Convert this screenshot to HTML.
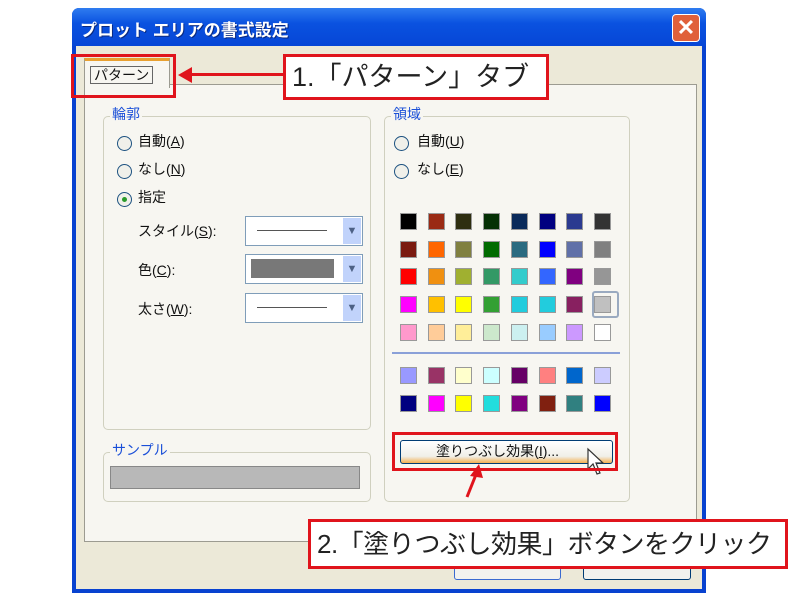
<!DOCTYPE html>
<html><head><meta charset="utf-8">
<style>
body{margin:0;width:800px;height:600px;background:#fff;position:relative;overflow:hidden;font-family:"Liberation Sans","Noto Sans CJK JP",sans-serif;}
.abs{position:absolute;}
.win{left:72px;top:8px;width:634px;height:585px;background:#0842d0;border-radius:7px 7px 0 0;}
.title{left:72px;top:8px;width:634px;height:38px;border-radius:7px 7px 0 0;background:linear-gradient(#2f7cf0,#0a52e0 40%,#0646d6);}
.ttext{left:80px;top:16px;color:#fff;font-weight:bold;font-size:17px;text-shadow:1px 1px #0a2a80;}
.close{left:672px;top:14px;width:26px;height:26px;border-radius:4px;background:#e0603a;border:1px solid #fff;color:#fff;font-weight:bold;font-size:22px;line-height:25px;text-align:center;}
.body{left:76px;top:46px;width:626px;height:543px;background:#ece9d8;}
.panel{left:84px;top:84px;width:611px;height:456px;background:#f7f6f1;border:1px solid #9c9b91;}
.grp{border:1px solid #d0d0bf;border-radius:5px;}
.lbl{color:#1a4fd8;font-size:14px;background:#f7f6f1;padding:0 2px;}
.t{font-size:14px;color:#111;white-space:nowrap;}
.radio{width:13px;height:13px;border:1px solid #1c5180;border-radius:50%;background:#f0f0ea;}
.combo{width:116px;height:28px;border:1px solid #7f9db9;background:#fff;}
.combo .dd{position:absolute;right:1px;top:1px;width:18px;height:26px;background:#c1d3fb;color:#4d6185;font-size:11px;text-align:center;line-height:26px;}
.sw{width:15px;height:15px;border:1px solid #999;}
.red{border:3px solid #e0141c;}
.callout{background:#fff;font-size:27px;color:#222;white-space:nowrap;overflow:hidden;}
.btn{border:1px solid #003c74;border-radius:3px;background:#f2f2ee;}
</style></head><body>
<div class="abs win"></div>
<div class="abs title"></div>
<div class="abs ttext">プロット エリアの書式設定</div>
<div class="abs close">✕</div>
<div class="abs body"></div>
<div class="abs panel"></div>
<div class="abs" style="left:84px;top:58px;width:84px;height:27px;background:#f7f6f1;border:1px solid #9c9b91;border-bottom:none;border-top:3px solid #e8a030;"></div>
<div class="abs t" style="left:90px;top:66px;border:1px solid #666;padding:0 3px;font-size:14px;line-height:16px;">パターン</div>
<div class="abs red" style="left:71px;top:54px;width:99px;height:38px;"></div>
<div class="abs" style="left:190px;top:73px;width:95px;height:3px;background:#e0141c;"></div>
<div class="abs" style="left:178px;top:67px;width:0;height:0;border-top:8px solid transparent;border-bottom:8px solid transparent;border-right:14px solid #e0141c;"></div>
<div class="abs red callout" style="left:283px;top:54px;width:254px;height:40px;line-height:40px;padding-left:6px;">1.「パターン」タブ</div>

<div class="abs grp" style="left:103px;top:116px;width:266px;height:312px;"></div>
<div class="abs lbl" style="left:110px;top:104px;">輪郭</div>
<div class="abs radio" style="left:117px;top:136px;"></div><div class="abs t" style="left:138px;top:131px;">自動(<u>A</u>)</div>
<div class="abs radio" style="left:117px;top:164px;"></div><div class="abs t" style="left:138px;top:159px;">なし(<u>N</u>)</div>
<div class="abs radio" style="left:117px;top:192px;"></div><div class="abs" style="left:122px;top:197px;width:5px;height:5px;border-radius:50%;background:#2a9a2a;"></div><div class="abs t" style="left:138px;top:187px;">指定</div>
<div class="abs t" style="left:138px;top:221px;">スタイル(<u>S</u>):</div>
<div class="abs t" style="left:138px;top:260px;">色(<u>C</u>):</div>
<div class="abs t" style="left:138px;top:299px;">太さ(<u>W</u>):</div>
<div class="abs combo" style="left:245px;top:216px;"><div class="abs" style="left:11px;top:13px;width:70px;height:1px;background:#555;"></div><div class="dd">▼</div></div>
<div class="abs combo" style="left:245px;top:254px;"><div class="abs" style="left:5px;top:4px;width:83px;height:19px;background:#787878;"></div><div class="dd">▼</div></div>
<div class="abs combo" style="left:245px;top:293px;"><div class="abs" style="left:11px;top:13px;width:70px;height:1px;background:#555;"></div><div class="dd">▼</div></div>
<div class="abs grp" style="left:103px;top:452px;width:266px;height:48px;"></div>
<div class="abs lbl" style="left:110px;top:440px;">サンプル</div>
<div class="abs" style="left:110px;top:466px;width:248px;height:21px;background:#b8b8b8;border:1px solid #888;"></div>
<div class="abs grp" style="left:384px;top:116px;width:244px;height:384px;"></div>
<div class="abs lbl" style="left:391px;top:104px;">領域</div>
<div class="abs radio" style="left:394px;top:136px;"></div><div class="abs t" style="left:417px;top:131px;">自動(<u>U</u>)</div>
<div class="abs radio" style="left:394px;top:164px;"></div><div class="abs t" style="left:417px;top:159px;">なし(<u>E</u>)</div>
<div class="abs" style="left:392px;top:352px;width:228px;height:2px;background:#8aa0d8;"></div>
<div class="abs" style="left:592px;top:291px;width:23px;height:23px;border:2px solid #9aaac0;border-radius:3px;"></div>
<div id="pal"></div>
<div class="abs btn" style="left:400px;top:440px;width:211px;height:22px;background:linear-gradient(#fff,#f0efe8 70%,#f4b050);"></div>
<div class="abs t" style="left:436px;top:441px;font-size:14px;">塗りつぶし効果(<u>I</u>)...</div>
<svg class="abs" style="left:586px;top:447px" width="20" height="30"><path d="M2 2 L2 22 L7 17 L11 27 L14 26 L10 16 L17 16 Z" fill="#fff" stroke="#333" stroke-width="1.2"/></svg>
<div class="abs red" style="left:392px;top:432px;width:220px;height:33px;"></div>
<div class="abs btn" style="left:454px;top:550px;width:105px;height:28px;border-color:#3a6ad0;"></div>
<div class="abs btn" style="left:583px;top:550px;width:106px;height:28px;"></div>
<svg class="abs" style="left:455px;top:460px" width="40" height="40"><line x1="12" y1="37" x2="22" y2="12" stroke="#e0141c" stroke-width="3"/><path d="M24 4 L15 16 L28 18 Z" fill="#e0141c"/></svg>
<div class="abs red callout" style="left:308px;top:519px;width:468px;height:44px;line-height:44px;padding-left:6px;font-size:26px;letter-spacing:-0.5px;">2.「塗りつぶし効果」ボタンをクリック</div>
<script>
var rows=[["#000","#9a2a14","#2e2e10","#053005","#0a2a5a","#000080","#2b3a90","#333"],
["#7a1a10","#ff6600","#808040","#006b00","#2a6a80","#0000ff","#6070a8","#808080"],
["#ff0000","#f09010","#a0b030","#339966","#33cccc","#3366ff","#800080","#969696"],
["#ff00ff","#ffc000","#ffff00","#33a033","#22ccdd","#22ccdd","#882060","#c0c0c0"],
["#ff99cc","#ffcc99","#ffee99","#cce8cc","#ccf0f0","#99ccff","#cc99ff","#fff"],
["#9999ff","#993366","#ffffcc","#ccffff","#660066","#ff8080","#0066cc","#ccccff"],
["#000080","#ff00ff","#ffff00","#22dddd","#800080","#802010","#308080","#0000ff"]];
var ys=[213,241,268,296,324,367,395],h="";
rows.forEach(function(r,i){r.forEach(function(c,j){h+='<div class="abs sw" style="left:'+(400+j*27.7).toFixed(0)+'px;top:'+ys[i]+'px;background:'+c+'"></div>';});});
document.getElementById("pal").innerHTML=h;
</script>
</body></html>
